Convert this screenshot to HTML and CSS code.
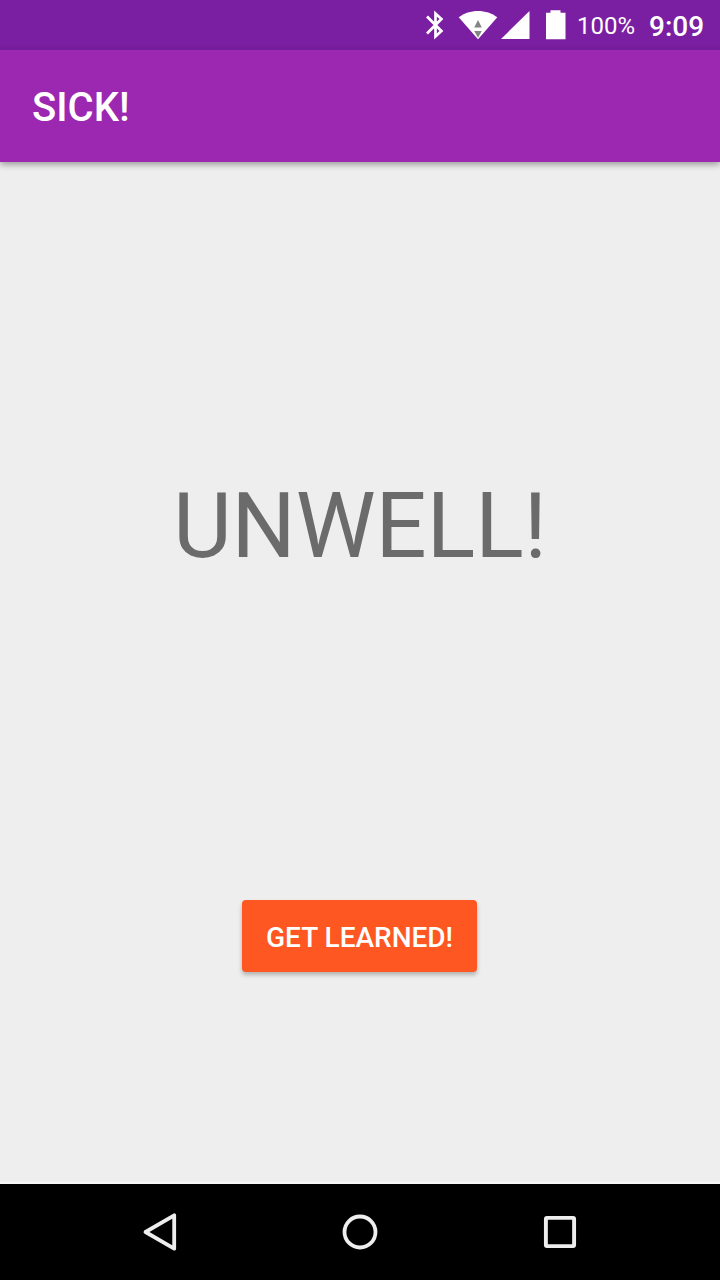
FILE: index.html
```html
<!DOCTYPE html>
<html lang="en">
<head>
<meta charset="utf-8">
<title>SICK!</title>
<link rel="stylesheet" href="styles.css">
</head>
<body>
<div class="screen">
  <div class="status-bar">
    <svg class="icon-bluetooth" width="20" height="50" viewBox="425 0 20 50"><path d="M427 16.500L441.400 31L435.500 36.500V13.500L441.400 19L427 33.500" fill="none" stroke="#fff" stroke-width="2.700"/></svg>
    <svg class="icon-wifi" width="40" height="50" viewBox="458 0 40 50"><path d="M458.700 17.300C464 13 471 10.900 478 10.900S492 13 497.300 17.300L478 39.300Z" fill="#fff"/><path d="M478 20L481.800 27.500H474.200ZM474.200 31H481.800L478 37.700Z" fill="#848484"/></svg>
    <svg class="icon-signal" width="30" height="50" viewBox="501 0 30 50"><path d="M529.500 11V39H501Z" fill="#fff"/></svg>
    <svg class="icon-battery" width="20" height="50" viewBox="546 0 20 50"><path d="M550.500 10.200H560.500V12.800H565.500V39.200H546V12.800H550.500Z" fill="#fff"/></svg>
    <span class="battery-level">100%</span>
    <span class="clock">9:09</span>
  </div>
  <header class="app-bar"><h1 class="app-title">SICK!</h1></header>
  <main class="content">
    <p class="message">UNWELL!</p>
    <button class="action" type="button">GET LEARNED!</button>
  </main>
  <nav class="nav-bar">
    <svg width="200" height="96" viewBox="60 1184 200 96"><path d="M145.500 1232L174.200 1215.300V1248.700Z" fill="none" stroke="#eee" stroke-width="3.800" stroke-linejoin="round"/></svg>
    <svg width="200" height="96" viewBox="260 1184 200 96"><circle cx="360" cy="1232" r="15.500" fill="none" stroke="#eee" stroke-width="3.800"/></svg>
    <svg width="200" height="96" viewBox="460 1184 200 96"><rect x="545.900" y="1217.900" width="28.200" height="28.200" rx="1" fill="none" stroke="#eee" stroke-width="3.900"/></svg>
  </nav>
</div>
</body>
</html>
```
FILE: styles.css
```css
* {
  box-sizing: border-box;
}

body {
  margin: 0;
  font-family: Roboto, "Liberation Sans", sans-serif;
}

.screen {
  display: flex;
  flex-direction: column;
  width: 720px;
  height: 1280px;
  overflow: hidden;
  background: #eee;
}

.status-bar {
  display: flex;
  align-items: center;
  flex: none;
  height: 50px;
  padding-left: 425px;
  color: #fff;
  background: linear-gradient(#7b1fa2 44px, #731c98);
}

.status-bar svg {
  flex: none;
}

.icon-wifi {
  margin-left: 13px;
}

.icon-signal {
  margin-left: 3px;
}

.icon-battery {
  margin-left: 15px;
}

.battery-level {
  margin-left: 11px;
  width: 72px;
  font-size: 24px;
  line-height: 50px;
  padding-top: 2px;
}

.clock {
  font-size: 28px;
  font-weight: 500;
  line-height: 50px;
  padding-top: 4px;
}

.app-bar {
  display: flex;
  align-items: center;
  flex: none;
  height: 112px;
  padding: 2px 32px 0;
  color: #fff;
  background: #9c27b0;
  box-shadow: 0 3px 6px rgba(0, 0, 0, 0.32);
  clip-path: inset(0 0 -12px);
}

.app-title {
  margin: 0;
  font-size: 40px;
  font-weight: 500;
}

.content {
  display: flex;
  flex: 1;
  flex-direction: column;
  align-items: center;
  border-bottom: 2px solid #f5f5f5;
}

.message {
  margin: 312px 0 0;
  font-size: 90px;
  line-height: 106px;
  color: #6b6b6b;
}

.action {
  width: 235px;
  height: 72px;
  margin: 320px 1px 0 0;
  padding: 2px 0 0;
  border: 0;
  border-radius: 4px;
  font: 500 28px Roboto, "Liberation Sans", sans-serif;
  color: #fff;
  background: #ff5722;
  box-shadow: 0 3px 4px rgba(0, 0, 0, 0.25);
}

.nav-bar {
  display: flex;
  flex: none;
  justify-content: center;
  height: 96px;
  background: #000;
}
```
